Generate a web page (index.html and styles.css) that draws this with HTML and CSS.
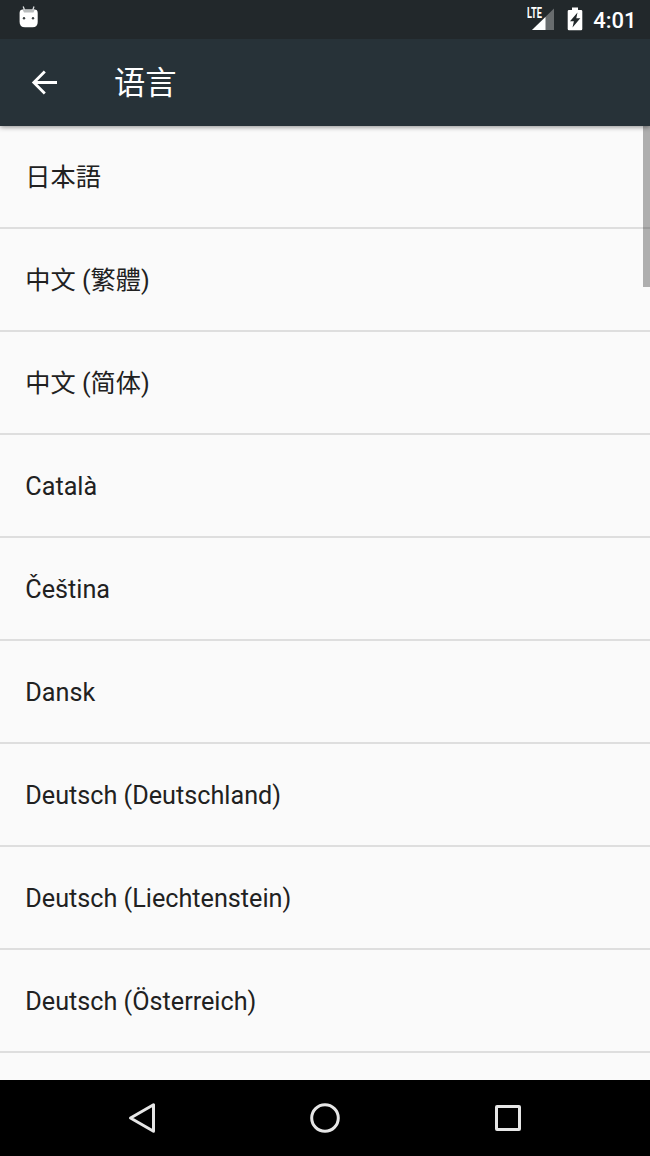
FILE: index.html
```html
<!DOCTYPE html>
<html lang="zh-CN">
<head>
    <meta charset="UTF-8">
    <meta name="viewport" content="width=device-width, initial-scale=1.0">
    <title>语言</title>
    <link rel="stylesheet" href="styles.css">
</head>
<body>
    <div class="status-bar">
        <svg class="debug-icon" width="20" height="24" viewBox="0 0 20 24">
            <path d="M4.2 1.5L5.5 5M15 1.5L13.8 5" stroke="#dfe1e2" stroke-width="1.3" fill="none"/>
            <path d="M.6 8Q.6 4.600 4 4.600H15.500Q18.700 4.600 18.700 8V17Q18.700 22.300 13.500 22.300H6Q.6 22.300 .6 17Z" fill="#fff"/>
            <path d="M3.500 4.600H15.800L14.500 7.400H5Z" fill="#b9bcbd"/>
            <circle cx="5" cy="13.300" r="1.200" fill="#3b4042"/>
            <circle cx="14" cy="13.300" r="1.200" fill="#3b4042"/>
        </svg>
        <div class="status-right">
            <div class="signal">
                <svg width="30" height="26" viewBox="0 0 30 26">
                    <path d="M28 3.500V25H6Z" fill="#686c6e"/>
                    <path d="M19.500 12V25H6Z" fill="#fff"/>
                </svg>
                <span class="lte">LTE</span>
            </div>
            <svg class="battery" width="16" height="24" viewBox="0 0 16 24">
                <path d="M5 .5H11V3H14Q15.300 3 15.300 4.300V22Q15.300 23.200 14 23.200H2Q.7 23.200 .7 22V4.300Q.7 3 2 3H5Z" fill="#fff"/>
                <path d="M10.500 5.500L9.300 11.300H13.300L5.500 20.500L6.900 14.300H3Z" fill="#22282b"/>
            </svg>
            <span class="clock">4:01</span>
        </div>
    </div>
    <div class="toolbar">
        <svg class="back" width="28" height="28" viewBox="0 0 28 28">
            <path d="M26 13.500H3M13.800 2.500L2.800 13.500L13.800 24.500" fill="none" stroke="#fff" stroke-width="2.800"/>
        </svg>
        <h1>语言</h1>
    </div>
    <div class="content">
        <ul class="languages">
            <li lang="ja">日本語</li>
            <li lang="zh-TW">中文 (繁體)</li>
            <li>中文 (简体)</li>
            <li>Català</li>
            <li>Čeština</li>
            <li>Dansk</li>
            <li>Deutsch (Deutschland)</li>
            <li>Deutsch (Liechtenstein)</li>
            <li>Deutsch (Österreich)</li>
        </ul>
        <div class="scrollbar"></div>
    </div>
    <div class="nav-bar">
        <svg width="34" height="34" viewBox="0 0 34 34">
            <path d="M28.500 3.800V30.200L5.500 17Z"/>
        </svg>
        <svg width="34" height="34" viewBox="0 0 34 34">
            <circle cx="17" cy="17" r="13.300"/>
        </svg>
        <svg width="34" height="34" viewBox="0 0 34 34">
            <rect x="5.500" y="5.500" width="23" height="23" rx=".5"/>
        </svg>
    </div>
</body>
</html>
```
FILE: styles.css
```css
* {
    box-sizing: border-box;
}
body {
    margin: 0;
    height: 1156px;
    display: flex;
    flex-direction: column;
    overflow: hidden;
    background-color: #fafafa;
    color: #212121;
    font-family: Roboto, "Noto Sans CJK SC", sans-serif;
}
svg {
    display: block;
    flex: none;
}
.status-bar {
    position: relative;
    z-index: 2;
    height: 39px;
    flex: none;
    display: flex;
    justify-content: space-between;
    padding: 0 13.5px 0 19px;
    background-color: #22282b;
    color: #fff;
}
.debug-icon {
    margin-top: 5px;
}
.status-right {
    display: flex;
}
.signal {
    position: relative;
    margin: 5px 11px 0 0;
}
/* network type sits over the signal triangle */
.lte {
    position: absolute;
    top: 1px;
    left: 1px;
    font-size: 14px;
    line-height: 14px;
    font-weight: 700;
    transform: scaleX(0.66);
    transform-origin: left;
}
.battery {
    margin: 7px 10.5px 0 0;
}
.clock {
    font-size: 22px;
    line-height: 41px;
    font-weight: 500;
}
.toolbar {
    height: 87px;
    flex: none;
    display: flex;
    align-items: center;
    padding-left: 31px;
    background-color: #273238;
    box-shadow: 0 1px 5px rgba(0, 0, 0, 0.45);
    z-index: 1;
}
.toolbar h1 {
    margin: 2px 0 0 55px;
    font-size: 31.3px;
    line-height: 40px;
    font-weight: 400;
    color: #fff;
}
.content {
    position: relative;
    flex: 1;
    overflow: hidden;
}
.languages {
    margin: 0;
    padding: 0;
    list-style: none;
}
.languages li {
    height: 103px;
    padding-left: 25.3px;
    border-bottom: 2px solid #dedede;
    font-size: 25.2px;
    line-height: 104px;
}
.languages li:lang(ja) {
    font-family: Roboto, "Noto Sans CJK JP", sans-serif;
}
.languages li:lang(zh-TW) {
    font-family: Roboto, "Noto Sans CJK TC", sans-serif;
}
.scrollbar {
    position: absolute;
    top: 0;
    right: 0;
    width: 7px;
    height: 161px;
    background-color: rgba(0, 0, 0, 0.3);
}
.nav-bar {
    height: 76px;
    flex: none;
    display: flex;
    justify-content: center;
    align-items: center;
    gap: 149px;
    background-color: #000;
}
.nav-bar svg {
    fill: none;
    stroke: #e6e6e6;
    stroke-width: 3;
    stroke-linejoin: round;
}
```
